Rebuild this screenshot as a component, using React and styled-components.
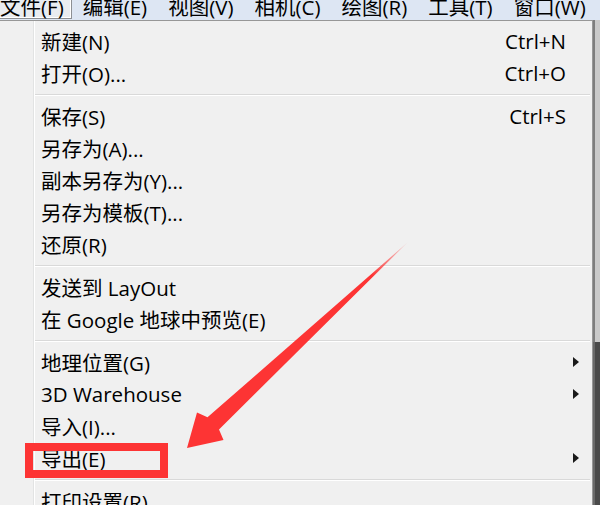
import React from "react";
import styled, { createGlobalStyle } from "styled-components";

const GlobalStyle = createGlobalStyle`
  html, body { margin: 0; padding: 0; background: #f0f0f0; }
  body { font-family: "Open Sans", "Noto Sans CJK SC", sans-serif; color: #000; }
`;

const Page = styled.div`
  position: relative;
  width: 600px;
  height: 505px;
  overflow: hidden;
  display: flex;
  flex-direction: column;
  background: #f0f0f0;
`;

const MenuBar = styled.div`
  height: 20px;
  flex: none;
  display: flex;
  align-items: stretch;
  background: #dde6f3;
  overflow: hidden;
  font-size: 20.5px;
`;

const BarItem = styled.div`
  display: flex;
  align-items: flex-start;
  line-height: 14px;
  padding: 0 ${(p) => (p.$pressed ? "7px" : "10px")} 0 ${(p) => (p.$first ? "0" : "11px")};
  white-space: nowrap;
  background: ${(p) => (p.$pressed ? "#e9ecf0" : "transparent")};
  border-right: ${(p) => (p.$pressed ? "1px solid #8d9094" : "none")};
  border-bottom: ${(p) => (p.$pressed ? "1px solid #8d9094" : "none")};
  box-shadow: ${(p) => (p.$pressed ? "inset -1px -1px 0 #ffffff" : "none")};
  height: ${(p) => (p.$pressed ? "19px" : "20px")};
  box-sizing: border-box;
`;

const Body = styled.div`
  flex: 1;
  display: flex;
  min-height: 0;
`;

const Menu = styled.div`
  width: 593px;
  flex: none;
  box-sizing: border-box;
  border-top: 1px solid #979797;
  border-right: 1px solid #979797;
  padding-top: 4px;
  background: linear-gradient(
    to right,
    #f0f0f0 33px,
    #e2e3e3 33px,
    #e2e3e3 34px,
    #ffffff 34px,
    #ffffff 35px,
    #f0f0f0 35px
  );
  font-size: 20.5px;
  display: flex;
  flex-direction: column;
`;

const Row = styled.div`
  height: 32px;
  flex: none;
  display: flex;
  align-items: center;
  padding-left: 41px;
  white-space: nowrap;
`;

const Label = styled.span`
  flex: 1;
`;

const Shortcut = styled.span`
  text-align: right;
`;

const SubCell = styled.span`
  width: 26px;
  flex: none;
  display: flex;
  align-items: center;
  padding-left: 7px;
  box-sizing: border-box;
`;

const Triangle = styled.span`
  width: 0;
  height: 0;
  border-top: 5px solid transparent;
  border-bottom: 5px solid transparent;
  border-left: 6px solid #1a1a1a;
`;

const Separator = styled.div`
  height: 11px;
  flex: none;
  display: flex;
  align-items: center;
  margin: 0 2px 0 35px;
  &::after {
    content: "";
    flex: 1;
    height: 0;
    border-top: 1px solid #d9d9d9;
    border-bottom: 1px solid #ffffff;
  }
`;

const Strip = styled.div`
  flex: 1;
  display: flex;
  flex-direction: column;
  background: #eaeaea;
`;

const StripTop = styled.div`
  height: 322px;
  background: linear-gradient(to right, #7d7d7d 0 2px, #c9c9c9 2px);
`;

const StripBottom = styled.div`
  flex: 1;
  background: linear-gradient(to right, #6a6a6a 0 2px, #4a4a4a 2px);
`;

const Highlight = styled.div`
  position: absolute;
  left: 25px;
  top: 443px;
  width: 143px;
  height: 35px;
  box-sizing: border-box;
  border: 8px solid #fd3434;
`;

const Overlay = styled.svg`
  position: absolute;
  left: 0;
  top: 0;
  width: 600px;
  height: 505px;
  pointer-events: none;
`;

const items = [
  { label: "新建(N)", shortcut: "Ctrl+N" },
  { label: "打开(O)...", shortcut: "Ctrl+O" },
  "sep",
  { label: "保存(S)", shortcut: "Ctrl+S" },
  { label: "另存为(A)..." },
  { label: "副本另存为(Y)..." },
  { label: "另存为模板(T)..." },
  { label: "还原(R)" },
  "sep",
  { label: "发送到 LayOut" },
  { label: "在 Google 地球中预览(E)" },
  "sep",
  { label: "地理位置(G)", sub: true },
  { label: "3D Warehouse", sub: true },
  { label: "导入(I)..." },
  { label: "导出(E)", sub: true },
  "sep",
  { label: "打印设置(R)..." },
];

const bar = ["文件(F)", "编辑(E)", "视图(V)", "相机(C)", "绘图(R)", "工具(T)", "窗口(W)"];

export default function App() {
  return (
    <>
      <GlobalStyle />
      <Page>
        <MenuBar>
          {bar.map((b, i) => (
            <BarItem key={b} $first={i === 0} $pressed={i === 0}>
              {b}
            </BarItem>
          ))}
        </MenuBar>
        <Body>
          <Menu>
            {items.map((it, i) =>
              it === "sep" ? (
                <Separator key={i} />
              ) : (
                <Row key={i}>
                  <Label>{it.label}</Label>
                  {it.shortcut && <Shortcut>{it.shortcut}</Shortcut>}
                  <SubCell>{it.sub && <Triangle />}</SubCell>
                </Row>
              )
            )}
          </Menu>
          <Strip>
            <StripTop />
            <StripBottom />
          </Strip>
        </Body>
        <Highlight />
        <Overlay viewBox="0 0 600 505">
          <defs>
            <linearGradient id="fade" gradientUnits="userSpaceOnUse" x1="408" y1="242" x2="372" y2="276">
              <stop offset="0" stopColor="#fd3434" stopOpacity="0.1" />
              <stop offset="1" stopColor="#fd3434" stopOpacity="1" />
            </linearGradient>
          </defs>
          <polygon
            points="408,242 219,429.5 223.5,440 187,448 197,412.5 207.5,417.3"
            fill="url(#fade)"
          />
        </Overlay>
      </Page>
    </>
  );
}
